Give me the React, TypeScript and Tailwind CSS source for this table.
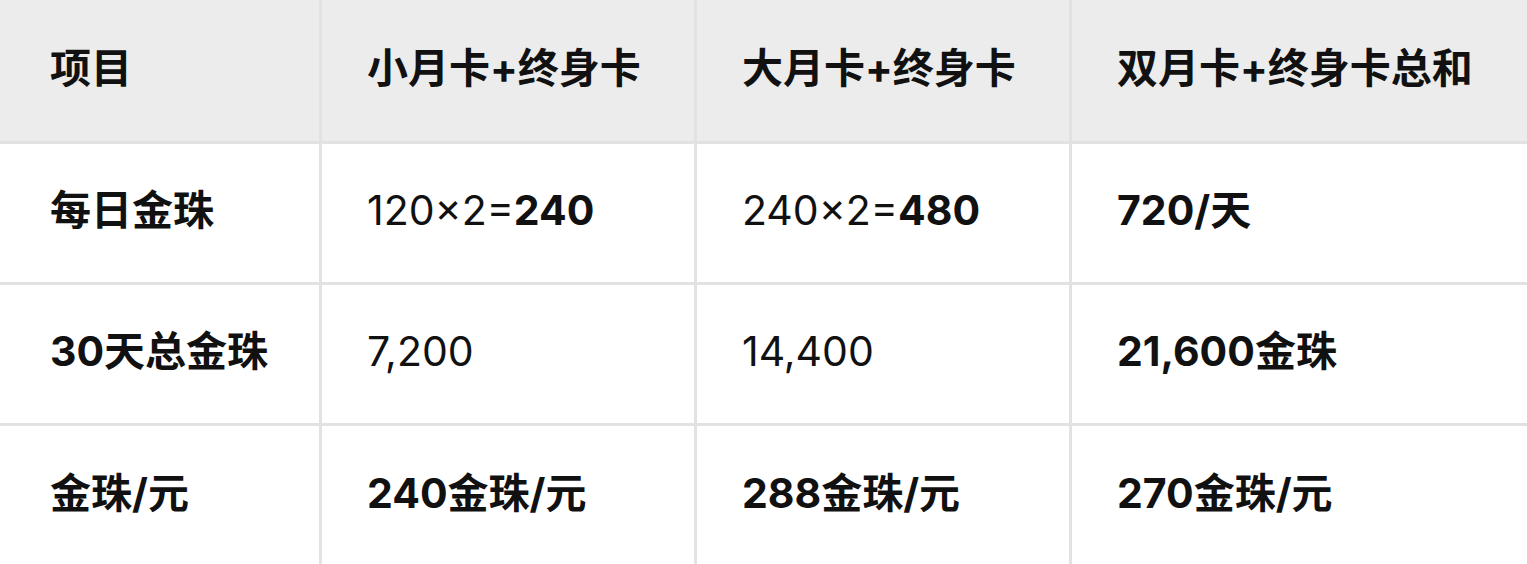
import React from "react";

const rows: { cells: React.ReactNode[] }[] = [
  {
    cells: [
      <span className="font-bold">每日金珠</span>,
      <span>120×2=<span className="font-bold">240</span></span>,
      <span>240×2=<span className="font-bold">480</span></span>,
      <span className="font-bold">720/天</span>,
    ],
  },
  {
    cells: [
      <span className="font-bold">30天总金珠</span>,
      <span>7,200</span>,
      <span>14,400</span>,
      <span className="font-bold">21,600金珠</span>,
    ],
  },
  {
    cells: [
      <span className="font-bold">金珠/元</span>,
      <span className="font-bold">240金珠/元</span>,
      <span className="font-bold">288金珠/元</span>,
      <span className="font-bold">270金珠/元</span>,
    ],
  },
];

const headers = ["项目", "小月卡+终身卡", "大月卡+终身卡", "双月卡+终身卡总和"];

export default function App() {
  return (
    <div
      className="w-[1527px] h-[564px] overflow-hidden bg-white text-[#111] text-[41px] leading-none"
      style={{ fontFamily: 'Inter, "Noto Sans CJK SC", sans-serif' }}
    >
      <div className="grid grid-cols-[322px_375px_375px_1fr] grid-rows-[144px_141px_141px_141px]">
        {headers.map((h, i) => (
          <div
            key={h}
            className={`flex items-center pb-[5px] bg-[#ececec] border-b-[3px] border-[#e2e2e2] font-bold ${
              i === 0 ? "pl-[50px] border-r-[3px]" : i < 3 ? "pl-[45px] border-r-[3px]" : "pl-[45px]"
            }`}
          >
            {h}
          </div>
        ))}
        {rows.map((r, ri) =>
          r.cells.map((c, ci) => (
            <div
              key={`${ri}-${ci}`}
              className={`flex items-center pb-[6px] border-[#e2e2e2] ${ri < 2 ? "border-b-[3px]" : ""} ${
                ci === 0 ? "pl-[50px] border-r-[3px]" : ci < 3 ? "pl-[45px] border-r-[3px]" : "pl-[45px]"
              }`}
            >
              {c}
            </div>
          ))
        )}
      </div>
    </div>
  );
}
